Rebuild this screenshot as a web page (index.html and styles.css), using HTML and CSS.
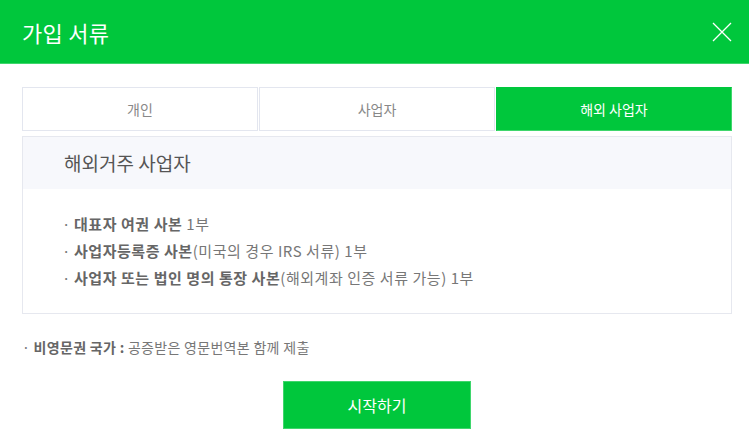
FILE: index.html
```html
<!DOCTYPE html>
<html>
<head>
<meta charset="utf-8">
<title>가입 서류</title>
<link rel="stylesheet" href="styles.css">
</head>
<body>
  <div id="popup">
    <div id="popup-header">
      <h1>가입 서류</h1>
      <button id="close-btn">
        <svg width="20" height="20" viewBox="0 0 20 20"><path d="M1 1L19 19M19 1L1 19" stroke="#fff" stroke-width="1.3" fill="none"/></svg>
      </button>
    </div>
    <div id="popup-body">
      <div id="tab-container">
        <div class="tab">개인</div>
        <div class="tab">사업자</div>
        <div class="tab active">해외 사업자</div>
      </div>
      <div id="doc-box">
        <div id="doc-title">해외거주 사업자</div>
        <ul id="doc-list">
          <li><b>대표자 여권 사본</b> 1부</li>
          <li><b>사업자등록증 사본</b>(미국의 경우 IRS 서류) 1부</li>
          <li><b>사업자 또는 법인 명의 통장 사본</b>(해외계좌 인증 서류 가능) 1부</li>
        </ul>
      </div>
      <p id="note">· <b>비영문권 국가 :</b> 공증받은 영문번역본 함께 제출</p>
      <div id="button-container">
        <button id="start-btn">시작하기</button>
      </div>
    </div>
  </div>
</body>
</html>
```

FILE: styles.css
```css
body {
  font-family: "Noto Sans CJK KR", "Noto Sans", sans-serif;
  margin: 0;
  padding: 0;
  background-color: #fff;
  color: #666;
}

#popup {
  width: 749px;
}

#popup-header {
  height: 63px;
  background-color: #00c73c;
  border-bottom: 1px solid #3fd66c;
  display: flex;
  align-items: center;
  justify-content: space-between;
  padding: 0 17px 0 22px;
}

#popup-header h1 {
  margin: 0;
  font-size: 22px;
  font-weight: 400;
  color: #fff;
  letter-spacing: 0.3px;
}

#close-btn {
  background: none;
  border: none;
  padding: 0;
  width: 20px;
  height: 20px;
  cursor: pointer;
}

#popup-body {
  padding: 23px 17px 0 22px;
}

#tab-container {
  display: flex;
}

.tab {
  flex: 1;
  height: 42px;
  line-height: 42px;
  text-align: center;
  font-size: 14px;
  color: #888;
  border: 1px solid #e3e6ef;
  background-color: #fff;
}

.tab + .tab {
  margin-left: 1px;
}

.tab.active {
  background-color: #00c73c;
  border-color: #00c73c;
  border-bottom-color: #3fd66c;
  border-right-color: #3fd66c;
  color: #fff;
}

#doc-box {
  margin-top: 5px;
  border: 1px solid #e6e8ef;
  height: 176px;
}

#doc-title {
  height: 52px;
  line-height: 52px;
  background-color: #f7f8fc;
  padding-left: 41px;
  font-size: 19px;
  color: #555;
}

#doc-list {
  list-style: none;
  margin: 0;
  padding: 21px 0 0 39px;
}

#doc-list li {
  font-size: 15px;
  line-height: 27px;
  letter-spacing: 0.55px;
  color: #777;
}

#doc-list li::before {
  content: "·";
  margin-right: 3px;
  color: #777;
}

#doc-list b,
#note b {
  color: #666;
  font-weight: 700;
}

#note {
  margin: 23px 0 0 0;
  font-size: 14px;
  letter-spacing: 0.3px;
  color: #777;
}

#button-container {
  display: flex;
  justify-content: center;
  margin-top: 24px;
}

#start-btn {
  width: 188px;
  height: 48px;
  background-color: #00c73c;
  border: 1px solid #3fd66c;
  color: #fff;
  font-family: "Noto Sans CJK KR", sans-serif;
  font-size: 16px;
  cursor: pointer;
}
```
